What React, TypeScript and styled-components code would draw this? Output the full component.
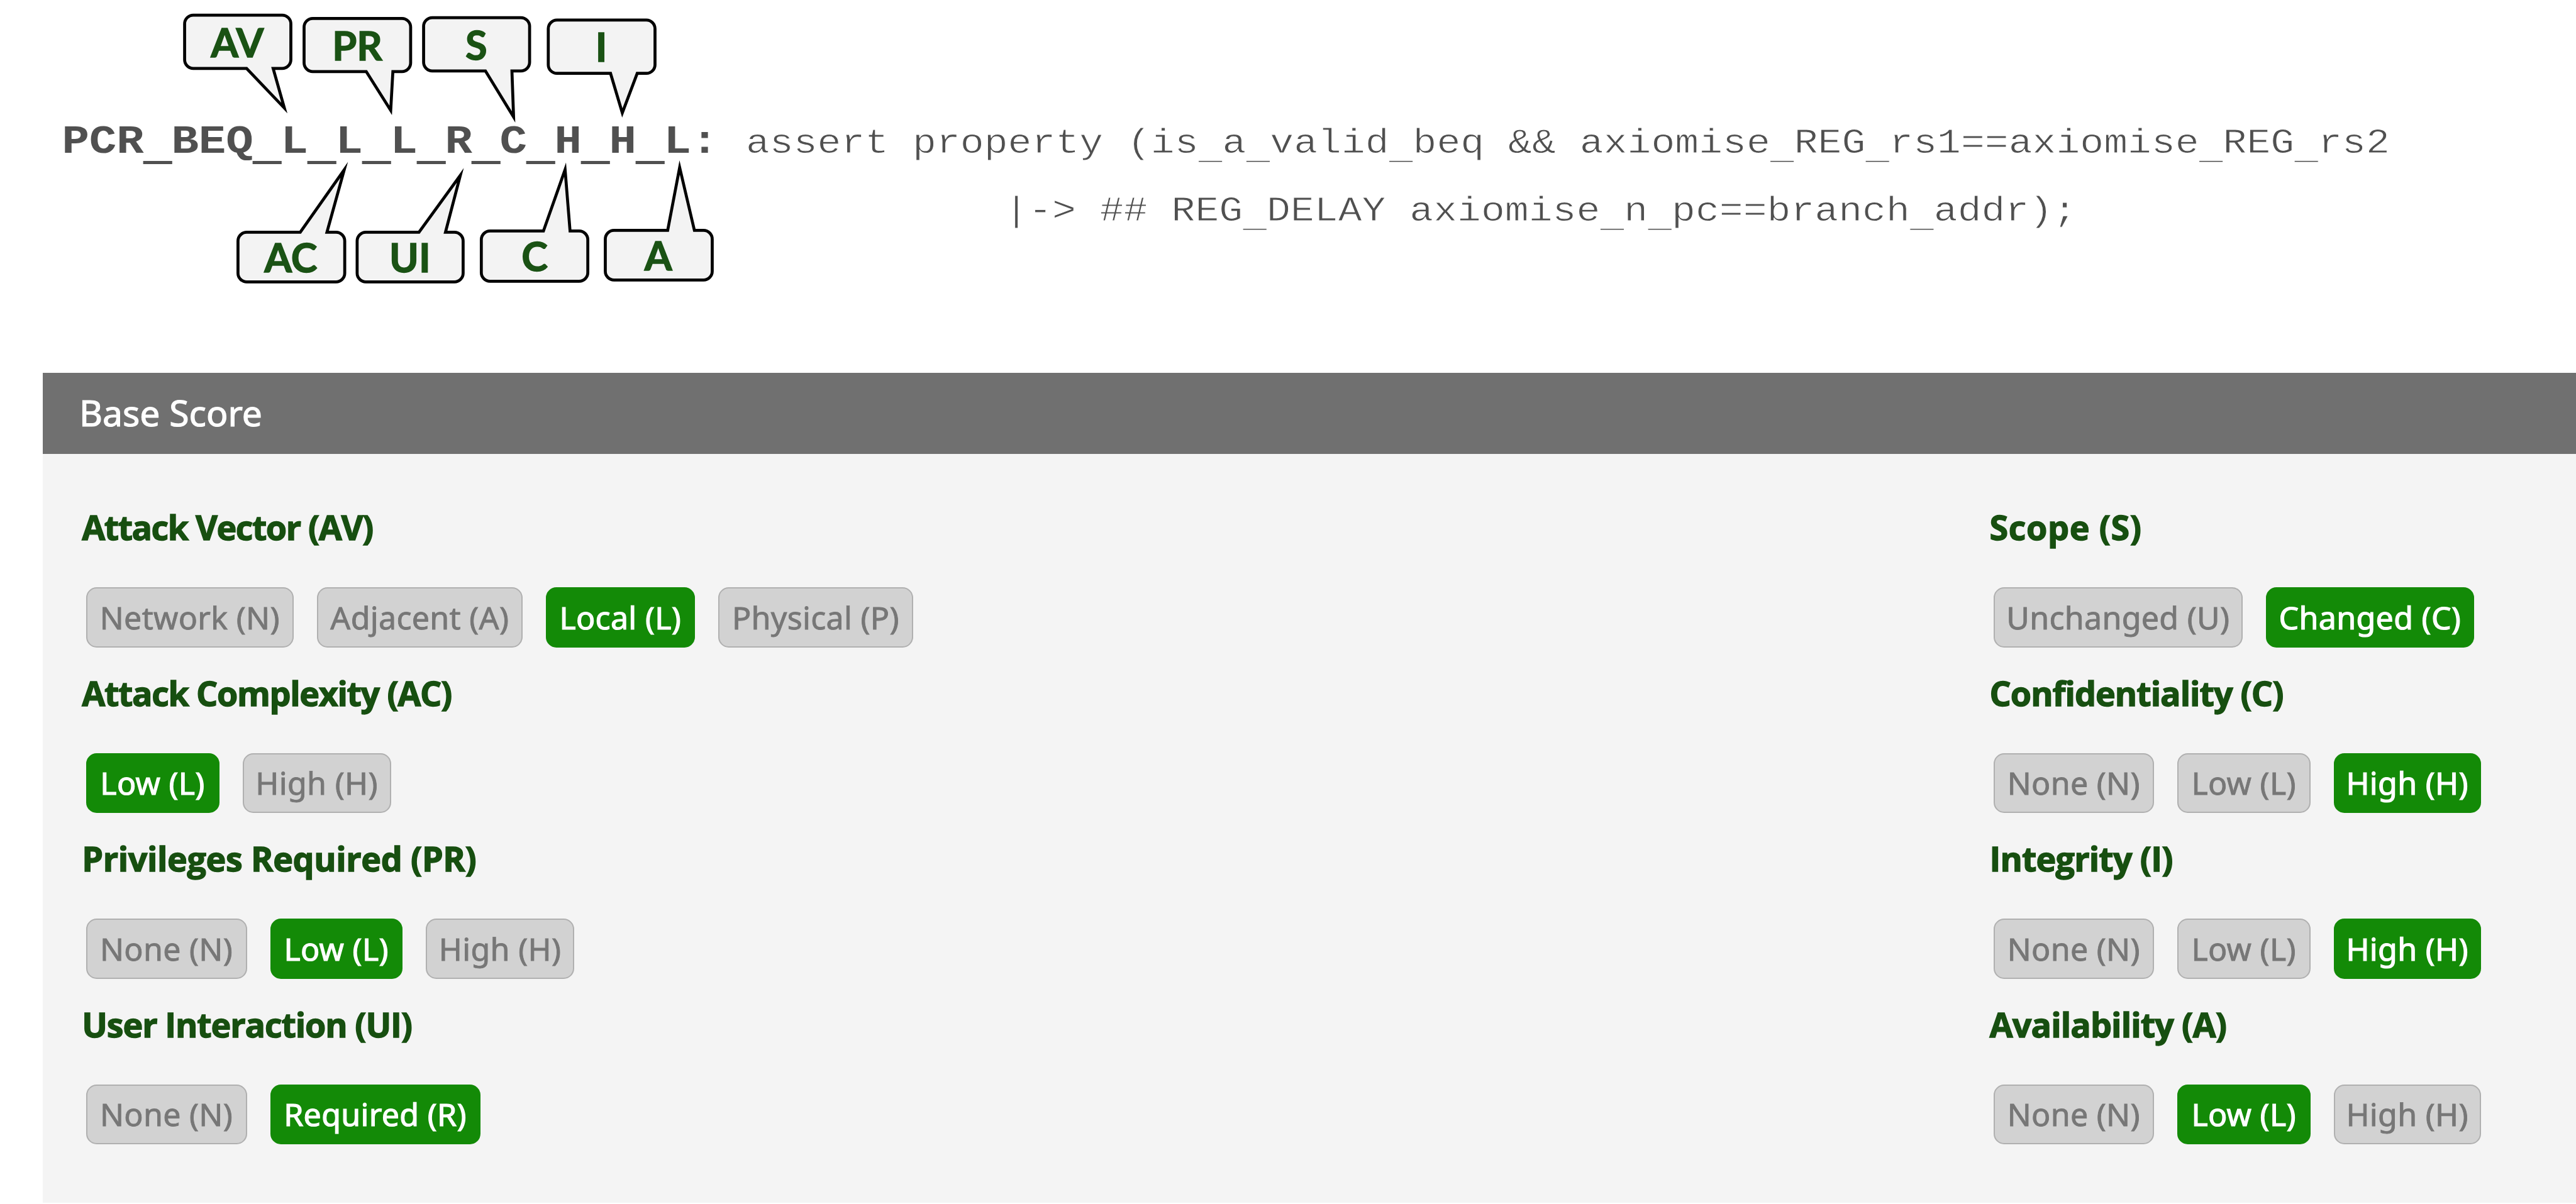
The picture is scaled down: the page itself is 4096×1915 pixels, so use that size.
import React from 'react'
import styled, { createGlobalStyle } from 'styled-components'

interface Option {
  label: string,
  width: number,
  active?: boolean
}

interface MetricType {
  title: string,
  spacing?: number,
  options: Option[]
}

interface CalloutType {
  label: string,
  box: [number, number, number, number],
  tip: [number, number],
  text: [number, number]
}

// design units: the artboard is 4151 wide and follows the window
const u = (n: number) => `${(n / 41.51).toFixed(4)}vw`

const GlobalStyle = createGlobalStyle`
  html, body {
    margin: 0;
    padding: 0;
    background: #fff;
    overflow: hidden;
  }
`

const Page = styled.main`
  position: relative;
  display: flex;
  flex-direction: column;
  width: 100vw;
  height: 100vh;
  background: #fff;
`

const Assertion = styled.section`
  box-sizing: border-box;
  height: ${u(600.7)};
  padding-top: ${u(173)};
  flex: none;
`

const CodeLine = styled.div<{ $indent: number, $height: number, $baseline: number }>`
  display: flex;
  align-items: baseline;
  height: ${p => u(p.$height)};
  padding-left: ${p => u(p.$indent)};
  font-family: 'Liberation Mono', monospace;
  line-height: ${u(109)};
  color: #505050;
  white-space: pre;
  transform: scaleY(0.87);
  transform-origin: 0 ${p => u(p.$baseline)};
`

const Underscore = styled.span`
  display: inline-block;
  transform: translateY(0.16em);
`

const PropertyName = styled.strong`
  font-size: ${u(73.47)};
  font-weight: 700;

  ${Underscore} {
    -webkit-text-stroke: ${u(2.4)} currentColor;
  }
`

const Code = styled.span`
  font-size: ${u(63.98)};
  -webkit-text-stroke: ${u(1)} #fff;
`

const CalloutLayer = styled.svg`
  position: absolute;
  top: 0;
  left: 0;
  width: ${u(4151)};
  height: ${u(500)};
`

const Bubble = styled.path`
  fill: #f3f3f3;
  stroke: #000;
  stroke-width: 4.8;
  stroke-miterlimit: 20;
`

const CalloutText = styled.text`
  font-family: Lato, sans-serif;
  font-size: 64px;
  font-weight: 700;
  text-anchor: middle;
  fill: #1a5214;
  stroke: #1a5214;
  stroke-width: 1.4;
`

const Panel = styled.section`
  display: flex;
  flex-direction: column;
  height: ${u(1337.6)};
  margin-left: ${u(69.4)};
  background: #f4f4f4;
`

const PanelHeader = styled.header`
  display: flex;
  align-items: center;
  box-sizing: border-box;
  height: ${u(131)};
  padding: 0 0 ${u(2)} ${u(58.2)};
  background: #707070;
  flex: none;
`

const PanelTitle = styled.h2`
  margin: 0;
  font-family: 'Noto Sans', 'Open Sans', sans-serif;
  font-size: ${u(57.8)};
  font-weight: 400;
  line-height: ${u(80)};
  color: #fff;
  -webkit-text-stroke: ${u(1.2)} #fff;
`

const PanelBody = styled.div`
  display: grid;
  grid-template-columns: ${u(3074)} 1fr;
  padding: ${u(80.3)} 0 0 ${u(62.6)};
`

const Column = styled.div`
  display: flex;
  flex-direction: column;
`

const MetricBlock = styled.div`
  height: ${u(267)};
`

const MetricTitle = styled.h3<{ $spacing: number }>`
  margin: 0 0 ${u(59.7)};
  font-family: 'Open Sans', sans-serif;
  font-size: ${u(54.6)};
  font-weight: 700;
  line-height: ${u(75)};
  letter-spacing: ${p => u(p.$spacing)};
  color: #174f10;
  white-space: nowrap;
  -webkit-text-stroke: ${u(1.4)} #174f10;
`

const Options = styled.div`
  display: flex;
  gap: ${u(37.5)};
  padding-left: ${u(6.8)};
`

const OptionButton = styled.button<{ $width: number, $active?: boolean }>`
  display: flex;
  align-items: center;
  justify-content: center;
  box-sizing: border-box;
  width: ${p => u(p.$width)};
  height: ${u(97)};
  padding: 0 ${u(0.5)} ${u(1)} 0;
  border: ${u(3)} solid ${p => p.$active ? '#138a07' : '#b0b0b0'};
  border-radius: ${u(17)};
  background: ${p => p.$active ? '#138a07' : '#d2d2d2'};
  color: ${p => p.$active ? '#fff' : '#777'};
  font-family: 'Noto Sans', 'Open Sans', sans-serif;
  font-size: ${u(50.8)};
  font-weight: 400;
  letter-spacing: ${u(0.3)};
  white-space: nowrap;
  flex: none;
  -webkit-text-stroke: ${p => u(p.$active ? 1.2 : 0.9)} currentColor;
`

const callouts: CalloutType[] = [
  { label: 'AV', box: [297.5, 24.4, 468.7, 110.3], tip: [458.2, 174.1], text: [382.4, 92] },
  { label: 'PR', box: [490, 29.7, 661.7, 115.3], tip: [629.6, 177.9], text: [575.6, 97] },
  { label: 'S', box: [682.6, 28.4, 853.4, 114.3], tip: [827.6, 188.5], text: [767.4, 96] },
  { label: 'I', box: [883.5, 32.4, 1055.5, 118.3], tip: [1002.8, 182], text: [969, 99.7] },
  { label: 'AC', box: [383.5, 374.4, 555.5, 454.3], tip: [554.7, 273.7], text: [468.5, 438.7] },
  { label: 'UI', box: [575.5, 374.4, 746.3, 454.3], tip: [741.8, 282.6], text: [660.6, 438.7] },
  { label: 'C', box: [775.6, 372.4, 947.2, 453.3], tip: [910.6, 273.4], text: [861.6, 436.3] },
  { label: 'A', box: [975.4, 371.4, 1147.7, 451.3], tip: [1095.2, 269.9], text: [1060.8, 435.7] }
]

const impactLevels = (active: string): Option[] => [
  { label: 'None (N)', width: 258 },
  { label: 'Low (L)', width: 215 },
  { label: 'High (H)', width: 237 }
].map(option => ({ ...option, active: option.label == active }))

const exploitability: MetricType[] = [
  {
    title: 'Attack Vector (AV)',
    spacing: -1.55,
    options: [
      { label: 'Network (N)', width: 334.5 },
      { label: 'Adjacent (A)', width: 331.5 },
      { label: 'Local (L)', width: 240, active: true },
      { label: 'Physical (P)', width: 314.5 }
    ]
  },
  {
    title: 'Attack Complexity (AC)',
    spacing: -1.4,
    options: [
      { label: 'Low (L)', width: 214.5, active: true },
      { label: 'High (H)', width: 239.5 }
    ]
  },
  {
    title: 'Privileges Required (PR)',
    spacing: -0.4,
    options: [
      { label: 'None (N)', width: 259 },
      { label: 'Low (L)', width: 213.5, active: true },
      { label: 'High (H)', width: 239.5 }
    ]
  },
  {
    title: 'User Interaction (UI)',
    spacing: -1.15,
    options: [
      { label: 'None (N)', width: 259 },
      { label: 'Required (R)', width: 339, active: true }
    ]
  }
]

const impact: MetricType[] = [
  {
    title: 'Scope (S)',
    spacing: 0.6,
    options: [
      { label: 'Unchanged (U)', width: 401 },
      { label: 'Changed (C)', width: 336, active: true }
    ]
  },
  { title: 'Confidentiality (C)', spacing: -1, options: impactLevels('High (H)') },
  { title: 'Integrity (I)', spacing: -0.85, options: impactLevels('High (H)') },
  { title: 'Availability (A)', spacing: -0.9, options: impactLevels('Low (L)') }
]

const RADIUS = 14

// rounded box with the tail leaving between 7/12 and 10/12 of its width
const bubblePath = ([x1, y1, x2, y2]: CalloutType['box'], [tx, ty]: CalloutType['tip']) => {
  const r = RADIUS
  const a = x1 + (x2 - x1) * 7 / 12
  const b = x1 + (x2 - x1) * 10 / 12
  const top = ty < y1 ? `H${a} L${tx} ${ty} L${b} ${y1}` : ''
  const bottom = ty > y2 ? `H${b} L${tx} ${ty} L${a} ${y2}` : ''

  return `M${x1 + r} ${y1} ${top} H${x2 - r} A${r} ${r} 0 0 1 ${x2} ${y1 + r} V${y2 - r} A${r} ${r} 0 0 1 ${x2 - r} ${y2} ${bottom} H${x1 + r} A${r} ${r} 0 0 1 ${x1} ${y2 - r} V${y1 + r} A${r} ${r} 0 0 1 ${x1 + r} ${y1} Z`
}

const Callout = ({ label, box, tip, text }: CalloutType) =>
  <g>
    <Bubble d={bubblePath(box, tip)} />
    <CalloutText x={text[0]} y={text[1]}>{label}</CalloutText>
  </g>

// underscores hang lower than the font puts them
const Identifier = ({ text }: { text: string }) =>
  <>
    {text.split('_').map((part, i) =>
      <React.Fragment key={i}>
        {i > 0 && <Underscore>_</Underscore>}
        {part}
      </React.Fragment>
    )}
  </>

const Metric = ({ title, spacing = 0, options }: MetricType) =>
  <MetricBlock>
    <MetricTitle $spacing={spacing}>{title}</MetricTitle>
    <Options>
      {options.map(option =>
        <OptionButton key={option.label} type="button" $width={option.width} $active={option.active}>
          {option.label}
        </OptionButton>
      )}
    </Options>
  </MetricBlock>

const App = () =>
  <Page>
    <GlobalStyle />
    <Assertion>
      <CodeLine $indent={99.7} $height={111.4} $baseline={74.1}>
        <PropertyName><Identifier text="PCR_BEQ_L_L_L_R_C_H_H_L: " /></PropertyName>
        <Code><Identifier text="assert property (is_a_valid_beq && axiomise_REG_rs1==axiomise_REG_rs2" /></Code>
      </CodeLine>
      <CodeLine $indent={1618.8} $height={109} $baseline={71.6}>
        <Code><Identifier text="|-> ## REG_DELAY axiomise_n_pc==branch_addr);" /></Code>
      </CodeLine>
    </Assertion>
    <Panel>
      <PanelHeader>
        <PanelTitle>Base Score</PanelTitle>
      </PanelHeader>
      <PanelBody>
        <Column>{exploitability.map(metric => <Metric key={metric.title} {...metric} />)}</Column>
        <Column>{impact.map(metric => <Metric key={metric.title} {...metric} />)}</Column>
      </PanelBody>
    </Panel>
    <CalloutLayer viewBox="0 0 4151 500">
      {callouts.map(callout => <Callout key={callout.label} {...callout} />)}
    </CalloutLayer>
  </Page>

export default App
